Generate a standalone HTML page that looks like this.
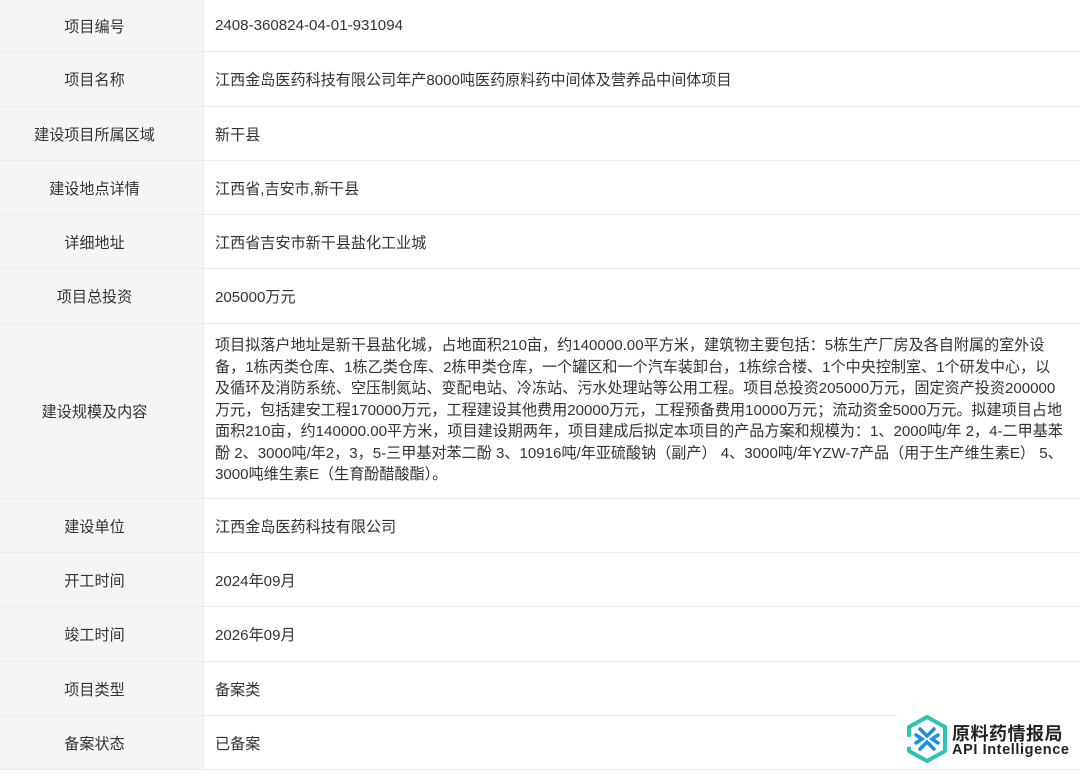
<!DOCTYPE html>
<html><head><meta charset="utf-8"><style>
*{margin:0;padding:0;box-sizing:border-box}
body{width:1080px;height:773px;overflow:hidden;background:#fff;font-family:"Liberation Sans","Noto Sans CJK SC",sans-serif;font-size:15.1px;color:#333}
.r{position:absolute;left:0;width:1080px;border-bottom:1px solid #ebebeb;display:flex}
.l{width:204px;background:#f5f5f5;border-right:1px solid #ebebeb;display:flex;align-items:center;justify-content:center;height:100%;padding-right:14px}
.v{padding-left:11px;display:flex;align-items:center;height:100%;white-space:nowrap}
.long{line-height:21.5px;display:block;padding-top:11px}
</style></head><body>
<div class="r" style="top:0;height:52px"><div class="l">项目编号</div><div class="v">2408-360824-04-01-931094</div></div>
<div class="r" style="top:52px;height:55px"><div class="l">项目名称</div><div class="v">江西金岛医药科技有限公司年产8000吨医药原料药中间体及营养品中间体项目</div></div>
<div class="r" style="top:107px;height:54px"><div class="l">建设项目所属区域</div><div class="v">新干县</div></div>
<div class="r" style="top:161px;height:54px"><div class="l">建设地点详情</div><div class="v">江西省,吉安市,新干县</div></div>
<div class="r" style="top:215px;height:54px"><div class="l">详细地址</div><div class="v">江西省吉安市新干县盐化工业城</div></div>
<div class="r" style="top:269px;height:55px"><div class="l">项目总投资</div><div class="v">205000万元</div></div>
<div class="r" style="top:324px;height:175px"><div class="l">建设规模及内容</div><div class="v long">项目拟落户地址是新干县盐化城，占地面积210亩，约140000.00平方米，建筑物主要包括：5栋生产厂房及各自附属的室外设<br>备，1栋丙类仓库、1栋乙类仓库、2栋甲类仓库，一个罐区和一个汽车装卸台，1栋综合楼、1个中央控制室、1个研发中心，以<br>及循环及消防系统、空压制氮站、变配电站、冷冻站、污水处理站等公用工程。项目总投资205000万元，固定资产投资200000<br>万元，包括建安工程170000万元，工程建设其他费用20000万元，工程预备费用10000万元；流动资金5000万元。拟建项目占地<br>面积210亩，约140000.00平方米，项目建设期两年，项目建成后拟定本项目的产品方案和规模为：1、2000吨/年 2，4-二甲基苯<br>酚 2、3000吨/年2，3，5-三甲基对苯二酚 3、10916吨/年亚硫酸钠（副产） 4、3000吨/年YZW-7产品（用于生产维生素E） 5、<br>3000吨维生素E（生育酚醋酸酯）。</div></div>
<div class="r" style="top:499px;height:54px"><div class="l">建设单位</div><div class="v">江西金岛医药科技有限公司</div></div>
<div class="r" style="top:553px;height:54px"><div class="l">开工时间</div><div class="v">2024年09月</div></div>
<div class="r" style="top:607px;height:55px"><div class="l">竣工时间</div><div class="v">2026年09月</div></div>
<div class="r" style="top:662px;height:54px"><div class="l">项目类型</div><div class="v">备案类</div></div>
<div class="r" style="top:716px;height:54px"><div class="l">备案状态</div><div class="v">已备案</div></div>
<div style="position:absolute;left:898px;top:712px;width:182px;height:56px;background:#fff"></div>
<svg style="position:absolute;left:905px;top:714px" width="44" height="50" viewBox="0 0 44 50">
<path d="M22 3 L40 13 L40 37 L22 47 L4 37 L4 13 Z" fill="none" stroke="#2cc5b0" stroke-width="4" stroke-linejoin="round" stroke-dasharray="90 10"/>
<g stroke="#1a8fe0" stroke-width="3.5" stroke-linecap="round" fill="none">
<path d="M15 15 L22 22 L29 15"/><path d="M15 35 L22 28 L29 35"/>
<path d="M11 21 L17 25 L11 29"/><path d="M33 21 L27 25 L33 29"/>
</g></svg>
<div style="position:absolute;left:952px;top:720px;font-size:18px;font-weight:bold;color:#222;letter-spacing:0.5px">原料药情报局</div>
<div style="position:absolute;left:952px;top:742px;font-size:14.5px;font-weight:bold;color:#222;letter-spacing:0.6px">API Intelligence</div>
</body></html>
